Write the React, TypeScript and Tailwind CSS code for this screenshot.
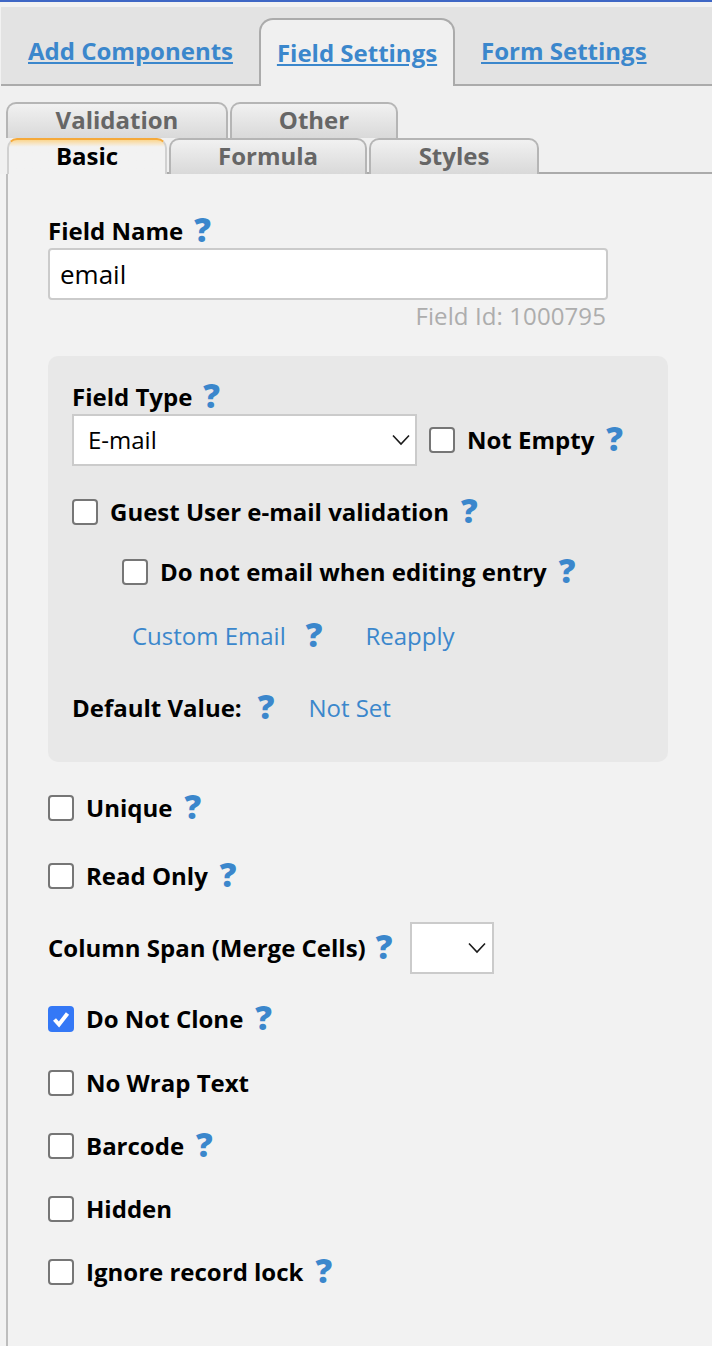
import type { ReactNode } from "react";

const Help = ({ className = "" }: { className?: string }) => (
  <span className={`text-[33px] leading-none font-extrabold text-[#3b87cc] relative -top-[2px] ${className}`}>?</span>
);

const Check = ({ checked = false }: { checked?: boolean }) =>
  checked ? (
    <span className="w-[26px] h-[26px] rounded-[4px] bg-[#3478f6] flex items-center justify-center shrink-0">
      <svg width="20" height="20" viewBox="0 0 20 20" fill="none">
        <path d="M3.5 10.5l4.5 5 8.5-11" stroke="#fff" strokeWidth="4" />
      </svg>
    </span>
  ) : (
    <span className="w-[26px] h-[26px] rounded-[4px] border-2 border-[#767676] bg-white shrink-0" />
  );

const Chevron = () => (
  <svg width="20" height="12" viewBox="0 0 20 12" fill="none">
    <path d="M2 1.5l8 8.5 8-8.5" stroke="#1a1a1a" strokeWidth="1.6" />
  </svg>
);

const Row = ({ label, checked, help, className = "" }: { label: string; checked?: boolean; help?: boolean; className?: string }) => (
  <div className={`flex items-center h-[30px] font-bold text-black ${className}`}>
    <Check checked={checked} />
    <span className="ml-3 text-[24px]">{label}</span>
    {help && <Help className="ml-3" />}
  </div>
);

const SubTab = ({ children, w, active }: { children: ReactNode; w: string; active?: boolean }) => (
  <div
    className={`${w} h-9 rounded-t-[10px] border-2 border-b-0 flex items-center justify-center pb-[2px] font-bold text-[24px] ${
      active
        ? "border-[#d0d0d0] border-t-[#f5a93a] bg-gradient-to-b from-[#fbd68f] via-[#f2f2f2] via-[20%] to-[#f2f2f2] text-black"
        : "border-[#b5b5b5] bg-gradient-to-b from-[#f1f1f1] to-[#d9d9d9] text-[#666]"
    }`}
  >
    {children}
  </div>
);

export default function App() {
  return (
    <div className="w-[712px] h-[1346px] overflow-hidden bg-[#f2f2f2] font-['Open_Sans',sans-serif] text-[24px] leading-none">
      <div className="h-[2px] bg-[#3f67c5]" />
      <div className="h-[5px] bg-[#f2f2f2]" />
      <div className="h-[79px] ml-[1px] bg-[#e3e3e3] border-b-2 border-[#ababab] flex items-end">
        <a className="ml-[27px] mb-[21px] text-[#3b87cc] underline font-bold">Add Components</a>
        <div className="ml-[26px] w-[196px] h-[68px] -mb-[2px] rounded-t-[14px] border-2 border-b-0 border-[#ababab] bg-[#f0f0f0] flex items-center justify-center">
          <a className="text-[#3b87cc] underline font-bold">Field Settings</a>
        </div>
        <a className="ml-[26px] mb-[21px] text-[#3b87cc] underline font-bold">Form Settings</a>
      </div>

      <div className="h-[88px] bg-[#f0f0f0] flex flex-col justify-end relative">
        <div className="flex ml-[6px] gap-[2px]">
          <SubTab w="w-[222px]">Validation</SubTab>
          <SubTab w="w-[168px]">Other</SubTab>
        </div>
        <div className="flex ml-[7px] gap-[2px] border-b-2 border-[#ababab]">
          <SubTab w="w-[160px] -mb-[2px]" active>Basic</SubTab>
          <SubTab w="w-[198px] -mb-[2px]">Formula</SubTab>
          <SubTab w="w-[170px] -mb-[2px]">Styles</SubTab>
        </div>
      </div>

      <div className="ml-[6px] border-l-2 border-[#bdbdbd] pl-[40px] h-[1172px] pt-[42px]">
        <div className="h-[30px] flex items-center font-bold text-black">
          Field Name <Help className="ml-[11px]" />
        </div>
        <input
          readOnly
          value="email"
          className="mt-[2px] block w-[560px] h-[52px] rounded-[4px] border-2 border-[#cbcbcb] bg-white px-[10px] text-[26px] text-black outline-none"
        />
        <div className="w-[558px] text-right text-[24px] tracking-[0.1px] text-[#adadad] mt-[4px] h-[24px]">Field Id: 1000795</div>

        <div className="mt-[28px] w-[620px] h-[406px] rounded-[10px] bg-[#e8e8e8] pl-[24px] pt-[26px]">
          <div className="h-[30px] flex items-center font-bold text-black">
            Field Type <Help className="ml-[11px]" />
          </div>
          <div className="flex items-center mt-[2px]">
            <div className="w-[345px] h-[52px] border-2 border-[#cbcbcb] bg-white flex items-center justify-between pl-[14px] pr-[4px] text-[24px] text-black">
              E-mail <Chevron />
            </div>
            <div className="ml-[12px]"><Row label="Not Empty" help /></div>
          </div>
          <Row label="Guest User e-mail validation" help className="mt-[31px]" />
          <Row label="Do not email when editing entry" help className="mt-[30px] ml-[50px]" />
          <div className="flex items-center h-[30px] mt-[34px] ml-[60px] text-[#3b87cc]">
            <a>Custom Email</a>
            <Help className="ml-[20px]" />
            <a className="ml-[43px]">Reapply</a>
          </div>
          <div className="flex items-center h-[30px] mt-[42px]">
            <span className="font-bold text-black">Default Value:</span>
            <Help className="ml-[16px]" />
            <a className="ml-[34px] text-[#3b87cc]">Not Set</a>
          </div>
        </div>

        <Row label="Unique" help className="mt-[31px]" />
        <Row label="Read Only" help className="mt-[38px]" />
        <div className="flex items-center h-[52px] mt-[31px] font-bold text-black">
          Column Span (Merge Cells)
          <Help className="ml-[10px]" />
          <div className="ml-[18px] w-[84px] h-[52px] border-2 border-[#cbcbcb] bg-white flex items-center justify-end pr-[5px]">
            <Chevron />
          </div>
        </div>
        <Row label="Do Not Clone" checked help className="mt-[30px]" />
        <Row label="No Wrap Text" className="mt-[34px]" />
        <Row label="Barcode" help className="mt-[33px]" />
        <Row label="Hidden" className="mt-[33px]" />
        <Row label="Ignore record lock" help className="mt-[33px]" />
      </div>
    </div>
  );
}
